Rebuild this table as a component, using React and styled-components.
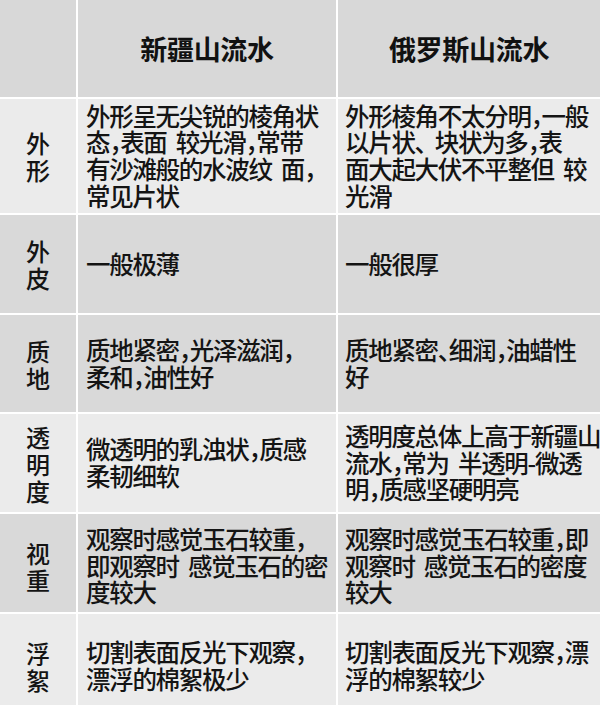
import React from "react";
import styled, { createGlobalStyle } from "styled-components";

const Global = createGlobalStyle`
  html, body { margin: 0; padding: 0; background: #ffffff; }
  body { font-family: "Noto Sans CJK SC", "Noto Sans", sans-serif; }
`;

const Table = styled.div`
  display: grid;
  grid-template-columns: 76px 258px 262px;
  grid-template-rows: 97px 114px 98px 97px 98px 98px 91px;
  gap: 2px;
  width: 600px;
  height: 705px;
  background: #ffffff;
  font-family: "Noto Sans CJK SC", "Noto Sans", sans-serif;
  color: #141414;
`;

const tones = { dark: "#d9d9d9", light: "#ebebeb", head: "#d8d8d8" };

const Cell = styled.div`
  background: ${(p) => tones[p.$tone]};
  display: flex;
  align-items: center;
  padding-top: ${(p) => p.$drop || 0}px;
`;

const HeadCell = styled(Cell)`
  justify-content: center;
  font-size: 27px;
  font-weight: 700;
  color: #111111;
  letter-spacing: -0.3px;
`;

const LabelCell = styled(Cell)`
  justify-content: center;
  text-align: center;
  font-size: 24px;
  line-height: 27px;
  font-weight: 500;
`;

const TextCell = styled(Cell)`
  padding-left: ${(p) => (p.$wide ? "7px" : "8px")};
  font-size: 24.5px;
  line-height: 26.7px;
  font-weight: 500;
  white-space: pre;
  font-feature-settings: "halt";
  letter-spacing: -1.3px;
  word-spacing: 5px;
`;

const rows = [
  {
    tone: "light",
    label: ["外", "形"],
    a: ["外形呈无尖锐的棱角状", "态，表面 较光滑，常带", "有沙滩般的水波纹 面，", "常见片状"],
    b: ["外形棱角不太分明，一般", "以片状、 块状为多，表", "面大起大伏不平整但 较", "光滑"],
  },
  { tone: "dark", label: ["外", "皮"], a: ["一般极薄"], b: ["一般很厚"] },
  {
    tone: "dark",
    label: ["质", "地"],
    a: ["质地紧密，光泽滋润，", "柔和，油性好"],
    b: ["质地紧密、细润，油蜡性", "好"],
  },
  {
    tone: "light",
    label: ["透", "明", "度"],
    a: ["微透明的乳浊状，质感", "柔韧细软"],
    b: ["透明度总体上高于新疆山", "流水，常为 半透明-微透", "明，质感坚硬明亮"],
  },
  {
    tone: "dark",
    drop: 6,
    label: ["视", "重"],
    a: ["观察时感觉玉石较重，", "即观察时 感觉玉石的密", "度较大"],
    b: ["观察时感觉玉石较重，即", "观察时 感觉玉石的密度", "较大"],
  },
  {
    tone: "light",
    drop: 12,
    label: ["浮", "絮"],
    a: ["切割表面反光下观察，", "漂浮的棉絮极少"],
    b: ["切割表面反光下观察，漂", "浮的棉絮较少"],
  },
];

const Lines = ({ lines }) => (
  <div>
    {lines.map((l, i) => (
      <div key={i}>{l}</div>
    ))}
  </div>
);

export default function App() {
  return (
    <>
      <Global />
      <Table>
        <HeadCell $tone="head" />
        <HeadCell $tone="head">新疆山流水</HeadCell>
        <HeadCell $tone="head">俄罗斯山流水</HeadCell>
        {rows.map((r, i) => (
          <React.Fragment key={i}>
            <LabelCell $tone={r.tone} $drop={r.drop}>
              <Lines lines={r.label} />
            </LabelCell>
            <TextCell $tone={r.tone} $drop={r.drop}>
              <Lines lines={r.a} />
            </TextCell>
            <TextCell $tone={r.tone} $drop={r.drop} $wide>
              <Lines lines={r.b} />
            </TextCell>
          </React.Fragment>
        ))}
      </Table>
    </>
  );
}
